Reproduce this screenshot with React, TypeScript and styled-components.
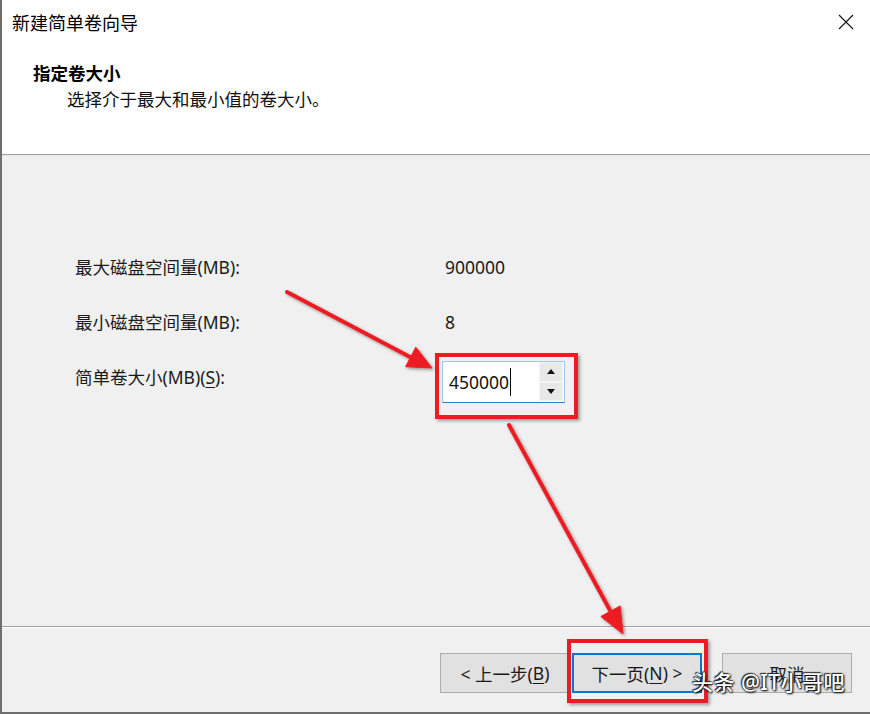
import React from 'react';
import styled, { createGlobalStyle } from 'styled-components';

const GlobalStyle = createGlobalStyle`
  html, body {
    margin: 0;
    padding: 0;
    background: #ffffff;
  }
  body {
    font-family: "Noto Sans", "Noto Sans CJK SC", sans-serif;
    color: #000;
  }
`;

const Window = styled.div`
  position: relative;
  width: 870px;
  height: 714px;
  box-sizing: border-box;
  border-left: 2px solid #6e6e6e;
  border-bottom: 2px solid #6e6e6e;
  display: flex;
  flex-direction: column;
  overflow: hidden;
  background: #ffffff;
`;

const TitleBar = styled.div`
  height: 44px;
  display: flex;
  align-items: center;
  justify-content: space-between;
  padding: 0 16px 0 10px;
  font-size: 18px;
  background: #ffffff;
`;

const CloseButton = styled.span`
  display: flex;
  width: 16px;
  height: 16px;
`;

const Header = styled.div`
  height: 111px;
  box-sizing: border-box;
  padding: 16px 0 0 31px;
  border-bottom: 1px solid #a0a0a0;
  background: #ffffff;
`;

const HeaderTitle = styled.div`
  font-size: 17.5px;
  font-weight: 700;
  line-height: 26px;
`;

const HeaderSub = styled.div`
  font-size: 17.5px;
  line-height: 26px;
  padding-left: 34px;
  color: #111;
`;

const Body = styled.div`
  flex: 1;
  background: #f0f0f0;
  border-top: 1px solid #e6e6e6;
  border-bottom: 1px solid #a0a0a0;
  padding: 83px 0 0 73px;
`;

const Form = styled.div`
  display: grid;
  grid-template-columns: 367px auto;
  grid-auto-rows: 55px;
  align-items: center;
  justify-items: start;
  font-size: 17.5px;
`;

const Label = styled.div`
  color: #1a1a1a;
`;

const Value = styled.div`
  padding-left: 3px;
  color: #1a1a1a;
`;

const Key = styled.span`
  text-decoration: underline;
  text-underline-offset: 3px;
`;

const Highlight = styled.div<{ $inset: string }>`
  position: relative;
  width: fit-content;
  &::after {
    content: '';
    position: absolute;
    inset: ${(p) => p.$inset};
    border: 4px solid #ec1c24;
    box-shadow: 2px 2px 3px rgba(0, 0, 0, 0.35);
    pointer-events: none;
  }
`;

const SpinCell = styled(Highlight)`
  margin-top: 10px;
`;

const SpinBox = styled.div`
  width: 123px;
  height: 42px;
  box-sizing: border-box;
  border: 1px solid #9fc4e8;
  border-bottom-color: #2a7fd0;
  background: #ffffff;
  display: flex;
  align-items: center;
  justify-content: space-between;
  padding: 0 1px 0 6px;
`;

const SpinText = styled.span`
  display: flex;
  align-items: center;
  font-size: 17.5px;
  color: #111;
`;

const Caret = styled.span`
  display: inline-block;
  width: 1px;
  height: 28px;
  background: #000;
  margin-left: 1px;
`;

const SpinButtons = styled.div`
  display: flex;
  flex-direction: column;
  width: 24px;
  height: 39px;
`;

const SpinButton = styled.div`
  flex: 1;
  display: flex;
  align-items: center;
  justify-content: center;
  background: #e8e8e8;
  border: 1px solid #f4f4f4;
`;

const Footer = styled.div`
  flex: 0 0 85px;
  box-sizing: border-box;
  background: #f0f0f0;
  border-top: 1px solid #ffffff;
  display: flex;
  justify-content: flex-end;
  align-items: flex-start;
  padding: 25px 18px 0 0;
  gap: 20px;
`;

const ButtonPair = styled.div`
  display: flex;
  gap: 2px;
`;

const Button = styled.div<{ $primary?: boolean }>`
  width: 130px;
  height: 40px;
  box-sizing: border-box;
  display: flex;
  align-items: center;
  justify-content: center;
  font-size: 17.5px;
  background: #e1e1e1;
  border: 1px solid ${(p) => (p.$primary ? '#0078d7' : '#adadad')};
  box-shadow: ${(p) => (p.$primary ? 'inset 0 0 0 1px #0078d7' : 'none')};
  color: #1a1a1a;
`;

const Annotations = styled.svg`
  position: absolute;
  left: 0;
  top: 0;
  width: 870px;
  height: 714px;
  pointer-events: none;
`;

const Watermark = styled.div`
  position: absolute;
  left: 690px;
  top: 666px;
  font-size: 21px;
  font-weight: 500;
  color: #ffffff;
  letter-spacing: 0.5px;
  text-shadow: 0 0 2px #000, 1px 1px 2px #000, -1px -1px 1px #333;
  white-space: nowrap;
`;

const Triangle: React.FC<{ up?: boolean }> = ({ up }) => (
  <svg width="8" height="5" viewBox="0 0 8 5">
    <path d={up ? 'M0 5 L4 0 L8 5 Z' : 'M0 0 L4 5 L8 0 Z'} fill="#111" />
  </svg>
);

export default function App() {
  return (
    <>
      <GlobalStyle />
      <Window>
        <TitleBar>
          <span>新建简单卷向导</span>
          <CloseButton>
            <svg width="16" height="16" viewBox="0 0 16 16">
              <path d="M1 1 L15 15 M15 1 L1 15" stroke="#111" strokeWidth="1.1" />
            </svg>
          </CloseButton>
        </TitleBar>
        <Header>
          <HeaderTitle>指定卷大小</HeaderTitle>
          <HeaderSub>选择介于最大和最小值的卷大小。</HeaderSub>
        </Header>
        <Body>
          <Form>
            <Label>最大磁盘空间量(MB):</Label>
            <Value>900000</Value>
            <Label>最小磁盘空间量(MB):</Label>
            <Value>8</Value>
            <Label>
              简单卷大小(MB)(<Key>S</Key>):
            </Label>
            <SpinCell $inset="-8px -13px -16px -7px">
              <SpinBox>
                <SpinText>
                  450000
                  <Caret />
                </SpinText>
                <SpinButtons>
                  <SpinButton>
                    <Triangle up />
                  </SpinButton>
                  <SpinButton>
                    <Triangle />
                  </SpinButton>
                </SpinButtons>
              </SpinBox>
            </SpinCell>
          </Form>
        </Body>
        <Footer>
          <ButtonPair>
            <Button>
              &lt; 上一步(<Key>B</Key>)
            </Button>
            <Highlight $inset="-14px -6px -10px -5px">
              <Button $primary>
                下一页(<Key>N</Key>) &gt;
              </Button>
            </Highlight>
          </ButtonPair>
          <Button>取消</Button>
        </Footer>

        <Annotations viewBox="0 0 870 714">
          <defs>
            <filter id="shadow" x="-20%" y="-20%" width="140%" height="140%">
              <feDropShadow dx="1.5" dy="1.5" stdDeviation="1.5" floodColor="#000" floodOpacity="0.4" />
            </filter>
          </defs>
          <g filter="url(#shadow)" fill="#ec1c24" stroke="#ec1c24">
            <line x1="285" y1="292" x2="410" y2="358" strokeWidth="4" strokeLinecap="round" />
            <polygon points="430,368 403.6,366.7 413.8,347.2" strokeWidth="1" />
            <line x1="507" y1="425" x2="610" y2="614" strokeWidth="4" strokeLinecap="round" />
            <polygon points="621,634 598.9,616.5 618.2,605.9" strokeWidth="1" />
          </g>
        </Annotations>
        <Watermark>头条 @IT小哥吧</Watermark>
      </Window>
    </>
  );
}
